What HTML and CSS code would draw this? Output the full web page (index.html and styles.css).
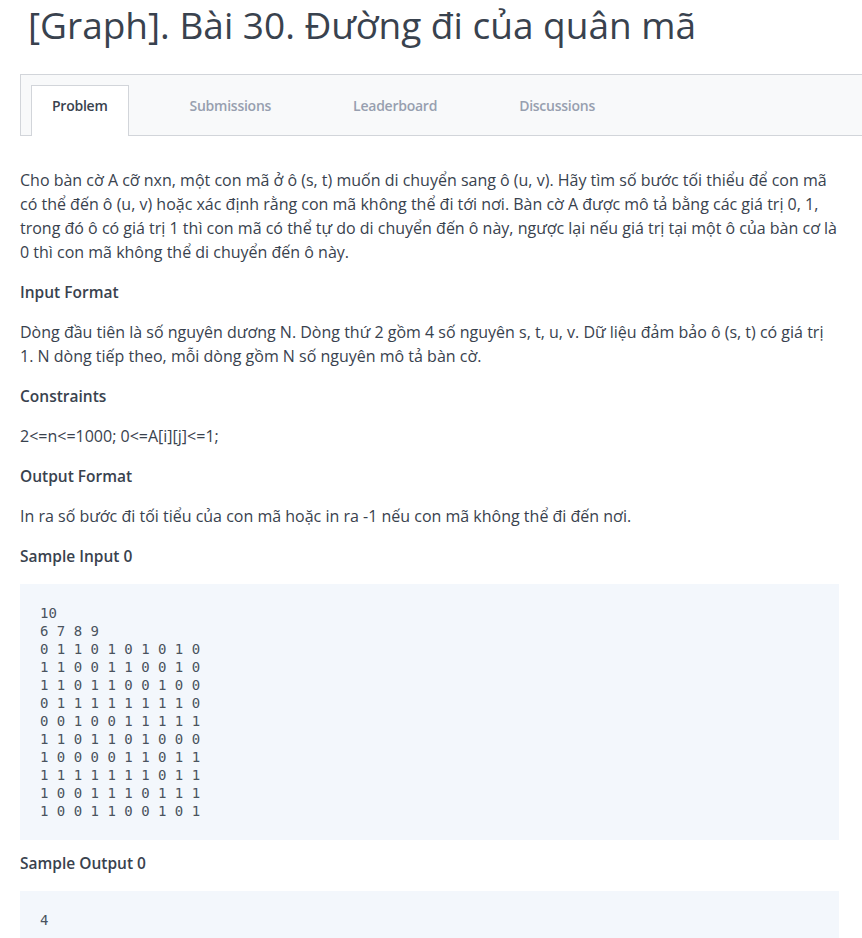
FILE: index.html
```html
<!DOCTYPE html>
<html lang="vi">
<head>
<meta charset="utf-8">
<title>[Graph]. Bài 30. Đường đi của quân mã</title>
<link rel="stylesheet" href="styles.css">
</head>
<body>
<div class="page">
  <h1 class="title">[Graph]. Bài 30. Đường đi của quân mã</h1>
  <nav class="tabs">
    <a class="tab active">Problem</a>
    <a class="tab">Submissions</a>
    <a class="tab">Leaderboard</a>
    <a class="tab">Discussions</a>
  </nav>
  <div class="content">
    <p class="text">Cho bàn cờ A cỡ nxn, một con mã ở ô (s, t) muốn di chuyển sang ô (u, v). Hãy tìm số bước tối thiểu để con mã có thể đến ô (u, v) hoặc xác định rằng con mã không thể đi tới nơi. Bàn cờ A được mô tả bằng các giá trị 0, 1, trong đó ô có giá trị 1 thì con mã có thể tự do di chuyển đến ô này, ngược lại nếu giá trị tại một ô của bàn cơ là 0 thì con mã không thể di chuyển đến ô này.</p>
    <h2 class="section">Input Format</h2>
    <p class="text">Dòng đầu tiên là số nguyên dương N. Dòng thứ 2 gồm 4 số nguyên s, t, u, v. Dữ liệu đảm bảo ô (s, t) có giá trị 1. N dòng tiếp theo, mỗi dòng gồm N số nguyên mô tả bàn cờ.</p>
    <h2 class="section">Constraints</h2>
    <p class="text">2&lt;=n&lt;=1000; 0&lt;=A[i][j]&lt;=1;</p>
    <h2 class="section">Output Format</h2>
    <p class="text">In ra số bước đi tối tiểu của con mã hoặc in ra -1 nếu con mã không thể đi đến nơi.</p>
    <h2 class="section">Sample Input 0</h2>
    <pre class="code">10
6 7 8 9
0 1 1 0 1 0 1 0 1 0
1 1 0 0 1 1 0 0 1 0
1 1 0 1 1 0 0 1 0 0
0 1 1 1 1 1 1 1 1 0
0 0 1 0 0 1 1 1 1 1
1 1 0 1 1 0 1 0 0 0
1 0 0 0 0 1 1 0 1 1
1 1 1 1 1 1 1 0 1 1
1 0 0 1 1 1 0 1 1 1
1 0 0 1 1 0 0 1 0 1</pre>
    <h2 class="section">Sample Output 0</h2>
    <pre class="code">4</pre>
  </div>
</div>
</body>
</html>
```
FILE: styles.css
```css
html, body {
  margin: 0;
  padding: 0;
  background: #ffffff;
  overflow: hidden;
}

.page {
  font-family: "Open Sans", "Liberation Sans", sans-serif;
  color: #39424e;
  padding-left: 20px;
}

.title {
  margin: 0;
  padding: 0 0 0 8px;
  font-size: 37px;
  font-weight: 400;
  line-height: 50px;
  color: #39424e;
  height: 74px;
}

.tabs {
  display: flex;
  gap: 40px;
  margin-right: -30px;
  padding: 10px 0 0 10px;
  background: #f8f9fa;
  border-top: 1px solid #d2d5da;
  border-bottom: 1px solid #d2d5da;
  border-left: 1px solid #d2d5da;
  box-sizing: border-box;
  height: 62px;
}

.tab {
  display: block;
  padding: 10px 20px 0;
  font-size: 14px;
  font-weight: 600;
  letter-spacing: -0.25px;
  line-height: 20px;
  color: #979faf;
  border: 1px solid transparent;
  border-bottom: none;
  height: 51px;
  box-sizing: border-box;
}

.tab.active {
  background: #ffffff;
  color: #39424e;
  border-color: #d2d5da;
}

.content {
  width: 819px;
  padding-top: 32px;
}

.text {
  margin: 0 0 16px;
  font-size: 16px;
  line-height: 24px;
}

.section {
  margin: 0 0 16px;
  font-size: 15.5px;
  font-weight: 600;
  line-height: 24px;
}

.code {
  margin: 0 0 11px;
  padding: 20px;
  background: #f3f7fc;
  font-family: "DejaVu Sans Mono", "Liberation Mono", monospace;
  font-size: 14px;
  line-height: 18px;
  color: #4a535e;
}
```
